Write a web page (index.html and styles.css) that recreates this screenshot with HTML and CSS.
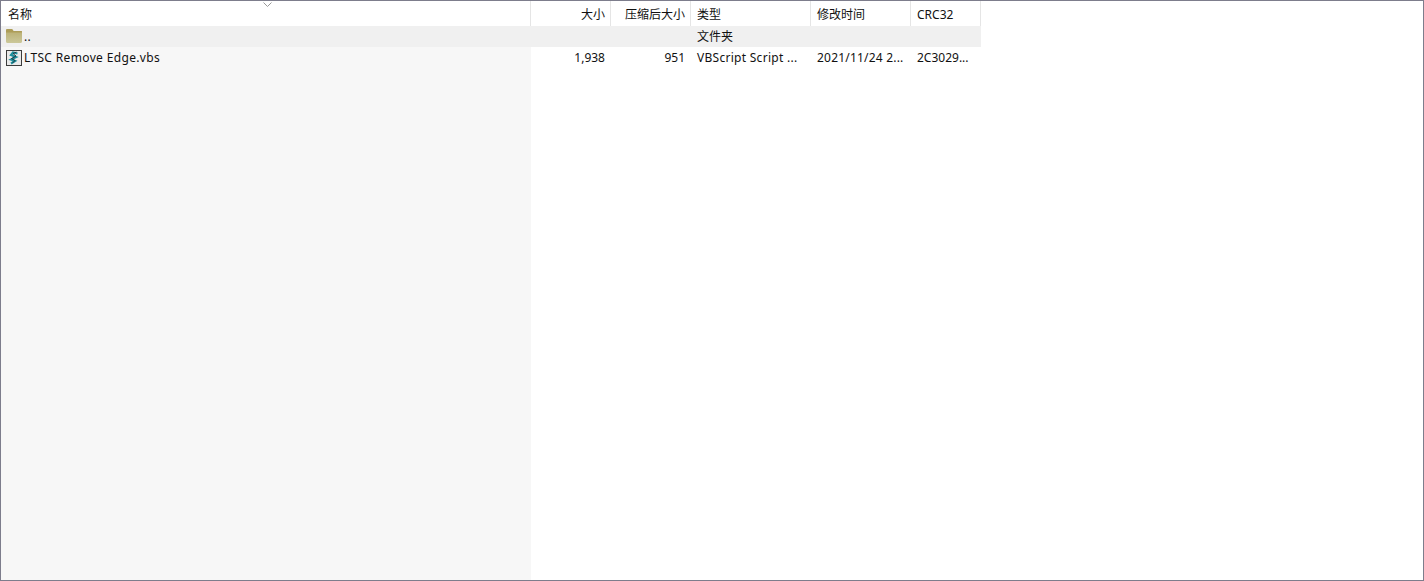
FILE: index.html
```html
<!DOCTYPE html>
<html lang="zh">
<head>
<meta charset="utf-8">
<title>LTSC Remove Edge</title>
<link rel="stylesheet" href="styles.css">
</head>
<body>
<div class="window">
  <div class="table">
    <div class="row head">
      <div class="cell c-name">名称<svg class="sort" width="9" height="5" viewBox="0 0 9 5"><path d="M.5.5 4.500 4.500 8.500.5" fill="none" stroke="#9a9a9a"/></svg></div>
      <div class="cell c-size num">大小</div>
      <div class="cell c-pack num">压缩后大小</div>
      <div class="cell c-type">类型</div>
      <div class="cell c-date">修改时间</div>
      <div class="cell c-crc">CRC32</div>
    </div>
    <div class="row up">
      <div class="cell c-name with-icon">
        <svg class="icon folder" width="16" height="16" viewBox="0 0 16 16">
          <defs><linearGradient id="fold" x1="0" y1="0" x2="0" y2="1"><stop offset="0" stop-color="#b7aa6c"/><stop offset="1" stop-color="#cbc89a"/></linearGradient></defs>
          <path d="M0 2.500C0 1.700.6 1 1.400 1H6l1.500 2H15c.6 0 1 .4 1 1v9.500c0 .8-.6 1.500-1.400 1.500H1.400C.6 15 0 14.300 0 13.500Z" fill="url(#fold)"/>
          <path d="M0 2.500C0 1.700.6 1 1.400 1H6l1.500 2H15c.6 0 1 .4 1 1v.6H0Z" fill="#ad9d58"/>
        </svg>..</div>
      <div class="cell c-size"></div>
      <div class="cell c-pack"></div>
      <div class="cell c-type">文件夹</div>
      <div class="cell c-date"></div>
      <div class="cell c-crc"></div>
    </div>
    <div class="row">
      <div class="cell c-name with-icon">
        <svg class="icon" width="16" height="16" viewBox="0 0 16 16">
          <rect x=".5" y=".5" width="15" height="15" fill="#e9e9e9" stroke="#3c3c3c"/>
          <path d="M11.500 3.500 7 2.500 5 5l5 2-5 2.500 4 1.500-4 2.500" fill="none" stroke="#1c8f9c" stroke-width="2.200"/>
          <path d="M10.500 2 7 3.500 10 6 5.500 8.500 9 10.500 6.500 13" fill="none" stroke="#23303a" stroke-width=".9"/>
        </svg>LTSC Remove Edge.vbs</div>
      <div class="cell c-size num">1,938</div>
      <div class="cell c-pack num">951</div>
      <div class="cell c-type wide">VBScript Script ...</div>
      <div class="cell c-date mid">2021/11/24 2...</div>
      <div class="cell c-crc">2C3029...</div>
    </div>
  </div>
</div>
</body>
</html>
```
FILE: styles.css
```css
* { box-sizing: border-box; }
html, body { margin: 0; height: 100%; }
body { background: #fff; color: #111; font: 12px/21px "Noto Sans", "Noto Sans CJK SC", sans-serif; overflow: hidden; }
.window {
  height: 581px;
  border: 1px solid #7d7d8c;
  background: linear-gradient(to right, #f7f7f7 530px, #fff 530px);
}
.table { width: 980px; }
.row { display: flex; height: 21px; }
.row.head { height: 25px; background: #fff; position: relative; line-height: 27px; }
.row.up { background: #f0f0f0; }
.cell { flex: none; padding: 0 6px; white-space: nowrap; overflow: hidden; }
.head .cell { border-right: 1px solid #e5e5e5; height: 25px; }
.num { text-align: right; }
.c-name { width: 530px; padding-left: 7px; }
.c-size { width: 80px; padding-right: 6px; }
.c-pack { width: 80px; padding-right: 6px; }
.head .num { padding-right: 5px; }
.c-type { width: 120px; }
.c-date { width: 100px; }
.c-crc { width: 70px; }
.wide { letter-spacing: .28px; }
.mid { letter-spacing: .2px; }
.with-icon { display: flex; align-items: center; padding-left: 5px; gap: 2px; background: inherit; letter-spacing: .35px; }
.icon { flex: none; }
.folder { margin-top: -1px; }
.sort { position: absolute; left: 262px; top: 1px; }
```
